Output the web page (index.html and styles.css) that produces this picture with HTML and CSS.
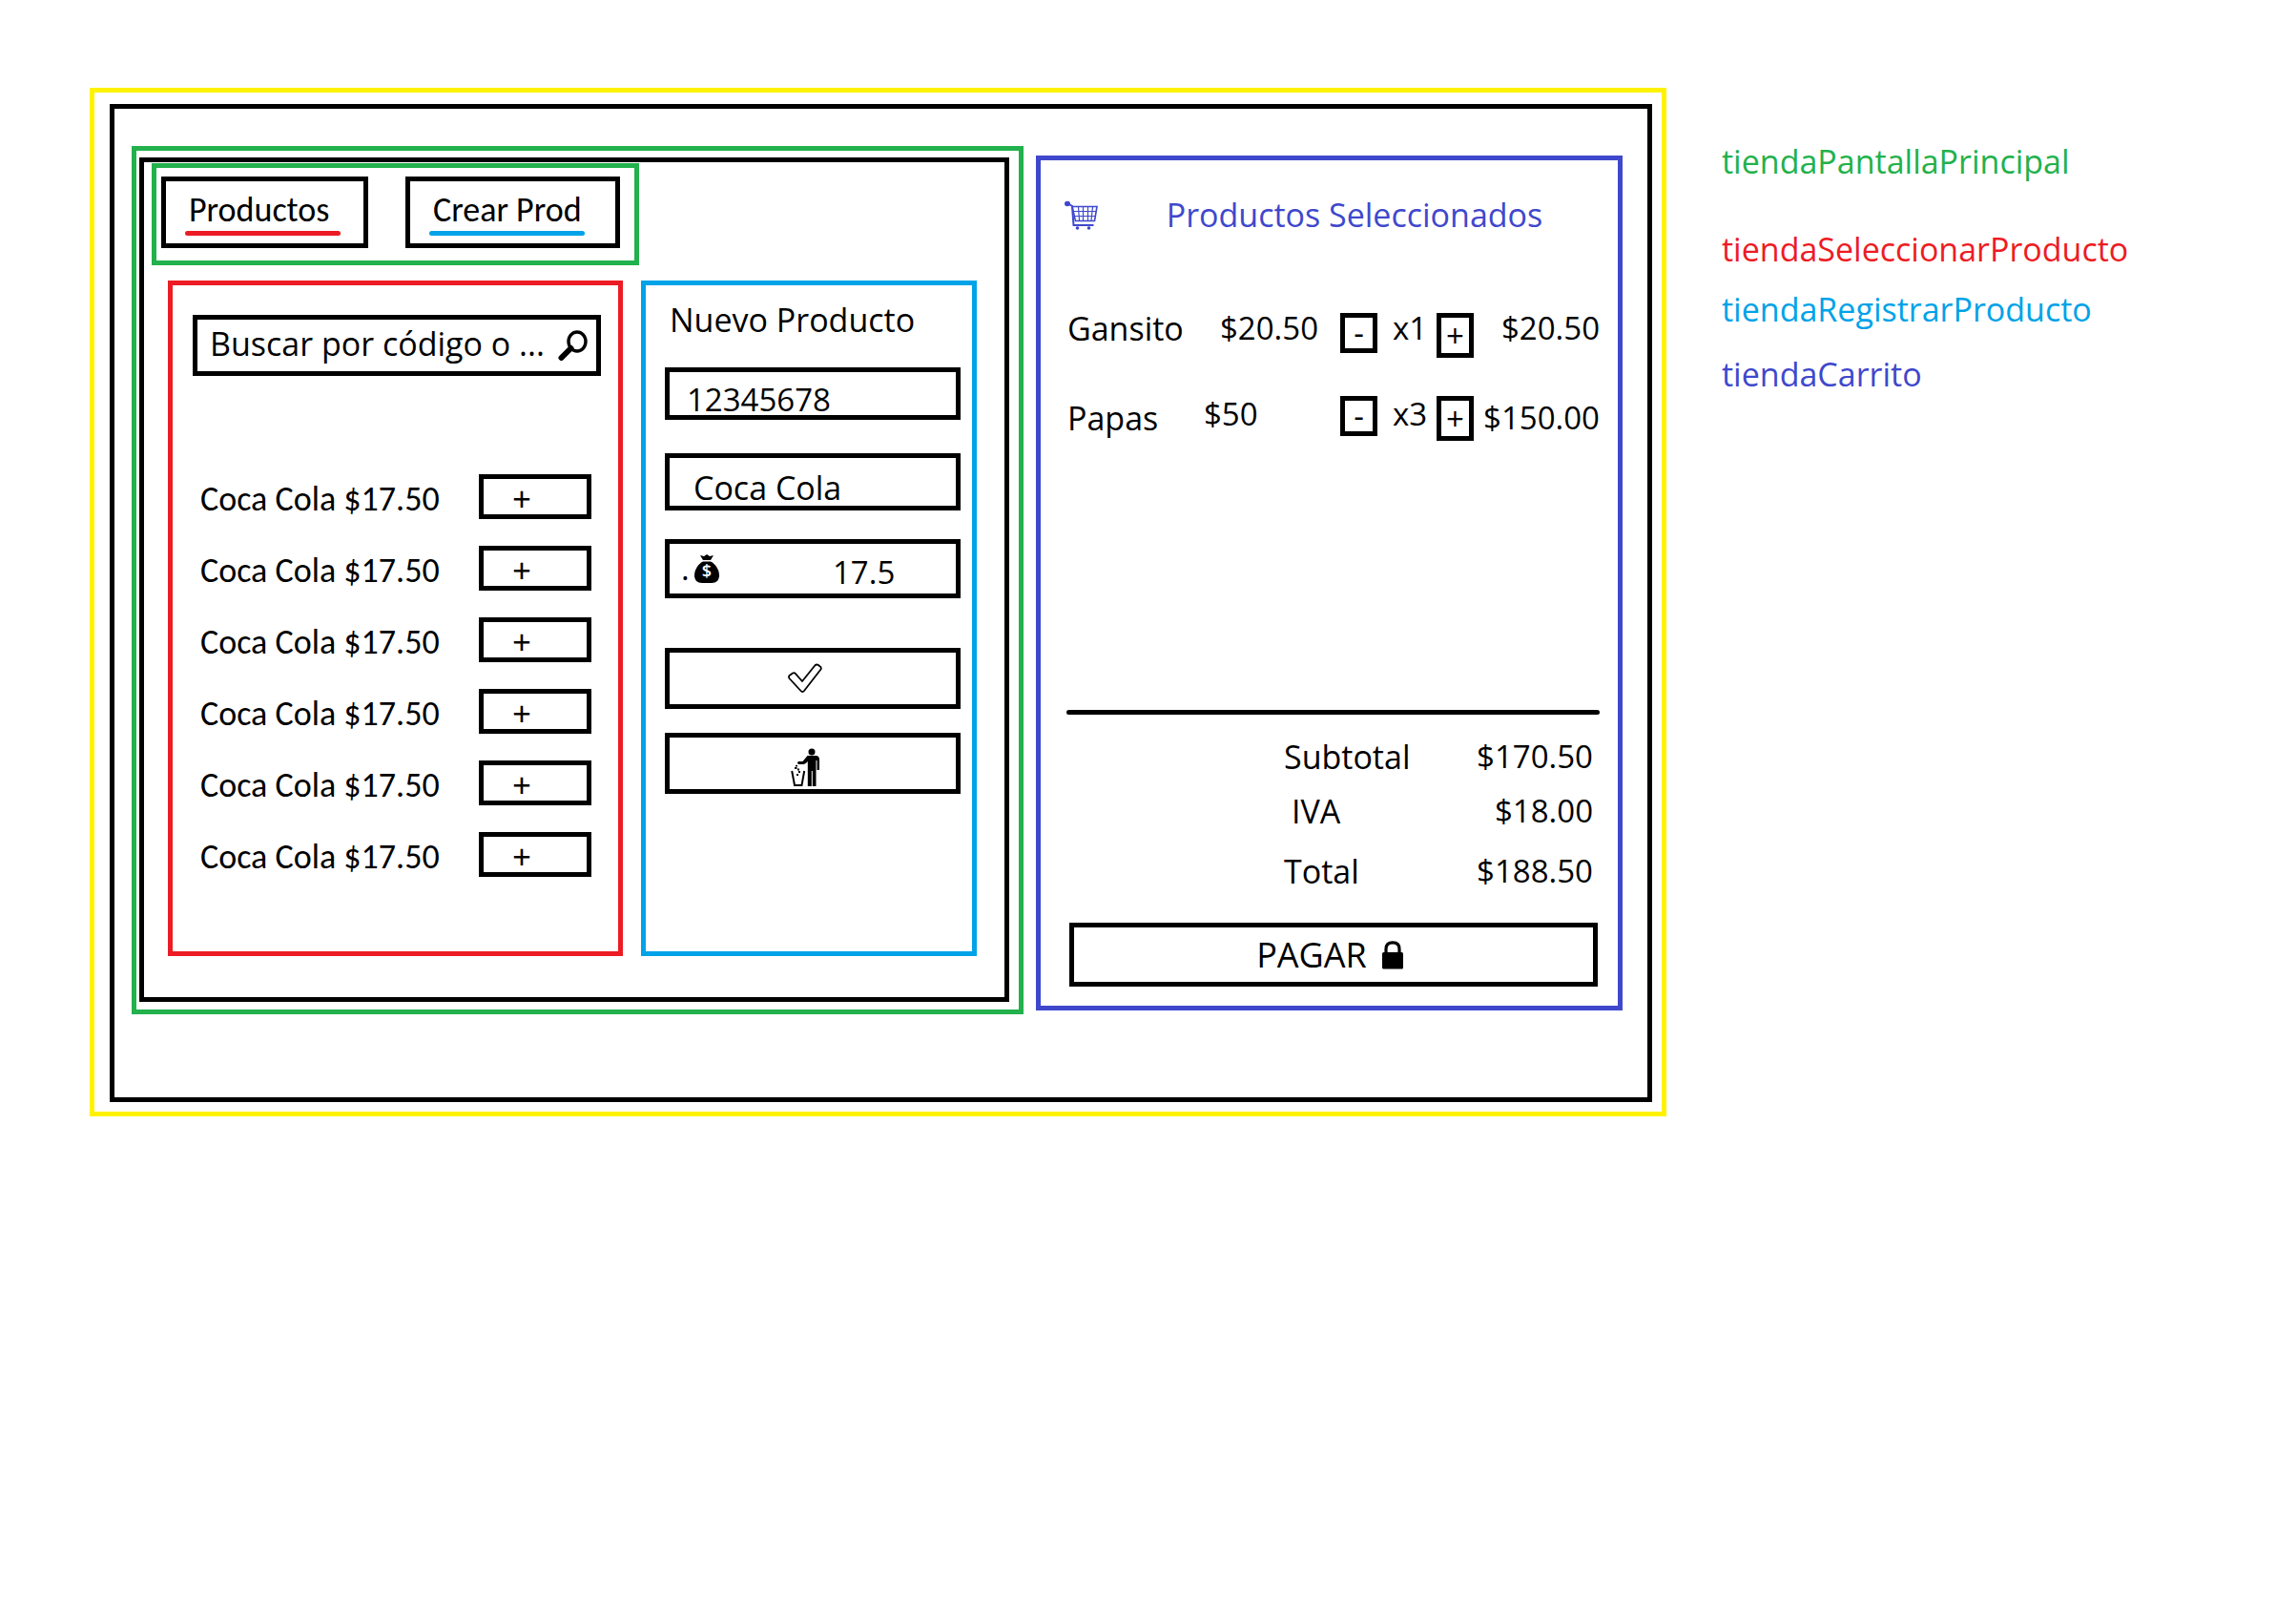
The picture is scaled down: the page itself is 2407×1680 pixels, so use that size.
FILE: index.html
```html
<!DOCTYPE html>
<html lang="es">
<head>
<meta charset="utf-8">
<meta name="viewport" content="width=device-width, initial-scale=1">
<title>Tienda</title>
<link rel="stylesheet" href="styles.css">
</head>
<body>
<div class="page">
  <main class="store">
    <div class="store__screen">
      <section class="workspace">
        <div class="workspace__inner">
          <nav class="tabs">
            <button class="tab tab--products" type="button"><span class="tab__label">Productos</span></button>
            <button class="tab tab--create" type="button"><span class="tab__label">Crear Prod</span></button>
          </nav>
          <div class="panels">
            <section class="picker">
              <div class="search">
                <input class="search__input" type="text" aria-label="Buscar por código o nombre" placeholder="Buscar por código o ...">
                <svg class="search__icon" viewBox="0 0 32 32" width="32" height="32" aria-hidden="true">
                  <ellipse cx="20" cy="12" rx="9" ry="10" fill="none" stroke="#000" stroke-width="3.400"/>
                  <path d="M13.500 19 L3.500 29" stroke="#000" stroke-width="6" stroke-linecap="round"/>
                </svg>
              </div>
              <ul class="products">
                <li class="product"><span>Coca Cola $17.50</span><button class="product__add" type="button">+</button></li>
                <li class="product"><span>Coca Cola $17.50</span><button class="product__add" type="button">+</button></li>
                <li class="product"><span>Coca Cola $17.50</span><button class="product__add" type="button">+</button></li>
                <li class="product"><span>Coca Cola $17.50</span><button class="product__add" type="button">+</button></li>
                <li class="product"><span>Coca Cola $17.50</span><button class="product__add" type="button">+</button></li>
                <li class="product"><span>Coca Cola $17.50</span><button class="product__add" type="button">+</button></li>
              </ul>
            </section>
            <form class="creator">
              <h2 class="creator__title">Nuevo Producto</h2>
              <div class="creator__fields">
                <input class="field field--code" type="text" aria-label="Código" value="12345678">
                <input class="field field--name" type="text" aria-label="Nombre" value="Coca Cola">
                <div class="price-field">
                  <label class="price-field__label" for="price">.
                    <svg viewBox="0 0 26 30" width="26" height="30" role="img" aria-label="Precio">
                      <path d="M6 1 L10 2 L13 0 L16 2 L20 1 L17 6 H9 Z"/>
                      <path d="M9 7.500 H17 C22 10 26 16 26 22 C26 27 23 30 18 30 H8 C3 30 0 27 0 22 C0 16 4 10 9 7.500 Z"/>
                      <text class="price-field__sign" x="13" y="24" text-anchor="middle">$</text>
                    </svg>
                  </label>
                  <input class="price-field__input" id="price" type="text" value="17.5">
                </div>
              </div>
              <div class="creator__actions">
                <button class="action" type="submit" aria-label="Guardar">
                  <svg viewBox="0 0 36 32" width="36" height="32" fill="none" stroke="#000" stroke-width="1.800" stroke-linejoin="round" aria-hidden="true">
                    <path d="M1.500 13 Q0.500 14.500 1.500 16 L13.500 29 Q15.300 31 17 29 L34.500 6.500 Q35.500 4.500 33.500 3.300 L31.500 1.800 Q30 1 28.500 2.300 L15 19 L7.800 10.800 Q6.500 9.500 5 10.500 Z"/>
                  </svg>
                </button>
                <button class="action" type="reset" aria-label="Descartar">
                  <svg class="action__litter" viewBox="0 0 30 40" width="30" height="40" aria-hidden="true">
                    <circle cx="22" cy="4" r="3.500"/>
                    <path d="M17.500 8 H27 Q30 8.500 30 12 V23 H27.500 V13 H26.500 V40 H22.800 V24 H21.800 V40 H17.800 V14 Q15.500 17 13.500 17 H8.500 Q7 16.800 7 15.500 Q7 14.200 8.500 14 H12.500 Z"/>
                    <path d="M1.200 24 L4 39 H11.500 L14.200 24" fill="none" stroke="#000" stroke-width="2"/>
                    <path d="M4 20 h2.500 v2 h-2.500 z M7 21.500 h2 v2 h-2 z M5 18 h2 v1.500 h-2 z M8 24 h2 v2 h-2 z M6 27 h2 v2 h-2 z"/>
                  </svg>
                </button>
              </div>
            </form>
          </div>
        </div>
      </section>

      <section class="cart">
        <header class="cart__header">
          <svg viewBox="0 0 35 31" width="35" height="31" fill="none" stroke="#3f48cc" aria-hidden="true">
            <ellipse cx="3" cy="3.500" rx="3" ry="2.800" fill="#3f48cc" stroke="none"/>
            <path d="M4 3.500 L8 6 L9.500 26 H30.500" stroke-width="2"/>
            <path d="M7.500 6.500 H34 L31.500 21.500 H11.500 L8 6.500" stroke-width="1.600"/>
            <path d="M9 11.500 H33 M10 16.500 H32 M14.500 7 L15.500 21 M19.500 7 V21 M24.500 7 V21 M29.500 7 L28 21" stroke-width="1.200"/>
            <circle cx="13.500" cy="29" r="1.800" fill="#3f48cc" stroke="none"/>
            <circle cx="25.500" cy="29" r="1.800" fill="#3f48cc" stroke="none"/>
          </svg>
          <h2 class="cart__title">Productos Seleccionados</h2>
        </header>
        <table class="items">
          <colgroup>
            <col class="items__col-name"><col class="items__col-price"><col class="items__col-less">
            <col class="items__col-count"><col class="items__col-more"><col class="items__col-total">
          </colgroup>
          <tbody>
            <tr>
              <td class="items__name">Gansito</td>
              <td class="items__price">$20.50</td>
              <td class="items__step"><button class="step step--less" type="button">-</button></td>
              <td class="items__count">x1</td>
              <td class="items__step items__step--more"><button class="step step--more" type="button">+</button></td>
              <td class="items__total">$20.50</td>
            </tr>
            <tr>
              <td class="items__name">Papas</td>
              <td class="items__price items__price--whole">$50</td>
              <td class="items__step"><button class="step step--less" type="button">-</button></td>
              <td class="items__count">x3</td>
              <td class="items__step items__step--more"><button class="step step--more" type="button">+</button></td>
              <td class="items__total">$150.00</td>
            </tr>
          </tbody>
        </table>
        <hr class="cart__rule">
        <dl class="totals">
          <div class="totals__row"><dt>Subtotal</dt><dd>$170.50</dd></div>
          <div class="totals__row totals__row--tax"><dt>IVA</dt><dd>$18.00</dd></div>
          <div class="totals__row totals__row--final"><dt>Total</dt><dd>$188.50</dd></div>
        </dl>
        <button class="pay" type="button">PAGAR
          <svg viewBox="0 0 22 30" width="22" height="30" aria-hidden="true">
            <path d="M4 13 V8.500 Q4 1.800 11 1.800 Q18 1.800 18 8.500 V13" fill="none" stroke="#000" stroke-width="3.200"/>
            <rect x="0" y="12" width="22" height="17.500" rx="1.500"/>
          </svg>
        </button>
      </section>
    </div>
  </main>

  <aside>
    <ul class="legend">
      <li class="legend__main">tiendaPantallaPrincipal</li>
      <li class="legend__picker">tiendaSeleccionarProducto</li>
      <li class="legend__creator">tiendaRegistrarProducto</li>
      <li class="legend__cart">tiendaCarrito</li>
    </ul>
  </aside>
</div>
</body>
</html>
```
FILE: styles.css
```css
:root {
  --green: #22b14c;
  --red: #ed1c24;
  --blue: #00a2e8;
  --indigo: #3f48cc;
  --yellow: #fff200;
  --line: 5px;
}

* { box-sizing: border-box; }

body {
  margin: 0;
  background: #fff;
  color: #000;
  font: 34px/48px "Open Sans", "Noto Sans", sans-serif;
}

h2, ul, dl, dd { margin: 0; padding: 0; font: inherit; }
ul { list-style: none; }
svg { display: block; flex: none; }

button, input {
  margin: 0;
  padding: 0;
  border: var(--line) solid #000;
  border-radius: 0;
  background: #fff;
  color: #000;
  font: inherit;
}

.page {
  display: grid;
  grid-template-columns: 1653fr 660fr;
  align-items: start;
  padding: 92px 0 92px 94px;
}

/* Store frame */
.store {
  border: var(--line) solid var(--yellow);
  padding: 12px 10px 10px 16px;
}

.store__screen {
  display: grid;
  grid-template-columns: 935fr 615fr;
  gap: 13px;
  align-items: start;
  border: var(--line) solid #000;
  padding: 39px 26px 87px 18px;
}

.workspace {
  border: var(--line) solid var(--green);
  padding: 7px 10px 8px 3px;
}

.workspace__inner {
  border: var(--line) solid #000;
  padding: 1px 0 43px;
}

/* Tabs */
.tabs {
  display: grid;
  grid-template-columns: 217px 225px;
  gap: 39px;
  width: fit-content;
  margin-left: 8px;
  border: var(--line) solid var(--green);
  padding: 9px 15px 13px 5px;
}

.tab {
  display: flex;
  align-items: flex-start;
  height: 75px;
  padding: 8px 20px;
  font: 36px/44px "Carlito", "Lato", sans-serif;
}

.tab__label {
  flex: none;
  width: 163px;
  padding-left: 4px;
  text-align: left;
}

.tab__label::after {
  content: "";
  display: block;
  height: 5px;
  margin-left: -4px;
  border-radius: 3px;
}

.tab--products .tab__label::after { background: var(--red); }
.tab--create .tab__label::after { background: var(--blue); }

/* Panels */
.panels {
  display: grid;
  grid-template-columns: minmax(0, 477fr) minmax(0, 352fr);
  gap: 19px;
  margin-top: 16px;
  padding: 0 29px 0 25px;
}

.picker {
  border: var(--line) solid var(--red);
  padding: 31px 18px 73px 21px;
}

.search {
  display: flex;
  align-items: center;
  height: 64px;
  border: var(--line) solid #000;
  padding: 0 8px 0 13px;
}

.search__input {
  flex: 1;
  min-width: 0;
  border: 0;
  padding-bottom: 4px;
}

.search__input::placeholder { color: #000; opacity: 1; }

.products {
  display: grid;
  gap: 23px;
  margin-top: 103px;
  padding: 0 10px 0 8px;
}

.product {
  display: flex;
  justify-content: space-between;
  align-items: flex-start;
  font: 36px/52px "Carlito", "Lato", sans-serif;
}

.product__add {
  width: 118px;
  height: 47px;
  padding: 4px 28px 0 0;
  line-height: 32px;
}

/* New product form */
.creator {
  border: var(--line) solid var(--blue);
  padding: 12px 12px 24px 20px;
}

.creator__title { padding-left: 5px; }

.creator__fields {
  display: grid;
  grid-auto-rows: 90px;
  align-items: start;
  margin-top: 26px;
}

.field {
  width: 100%;
  height: 60px;
  padding: 12px 8px 0 18px;
  line-height: 36px;
}

.field--code { height: 55px; font-size: 33px; }
.field--name { padding-left: 25px; }

.price-field {
  display: grid;
  grid-template-columns: 159px minmax(0, 1fr);
  height: 62px;
  border: var(--line) solid #000;
  padding-left: 12px;
  font-size: 33px;
}

.price-field__label {
  display: flex;
  align-items: center;
  gap: 5px;
}

.price-field__sign {
  fill: #fff;
  font-size: 18px;
  font-weight: 600;
}

.price-field__input {
  width: 100%;
  border: 0;
  padding-top: 8px;
  line-height: 36px;
}

.creator__actions {
  display: grid;
  gap: 25px;
  margin-top: 24px;
}

.action {
  display: flex;
  align-items: center;
  justify-content: center;
  height: 64px;
  padding-right: 16px;
}

.action__litter { margin-top: 8px; }

/* Cart */
.cart {
  margin-top: 10px;
  border: var(--line) solid var(--indigo);
  padding: 33px 19px 20px 25px;
}

.cart__header {
  display: grid;
  grid-template-columns: 35px 1fr;
  gap: 12px;
  align-items: center;
}

.cart__title {
  color: var(--indigo);
  text-align: center;
}

.items {
  width: 100%;
  margin-top: 71px;
  border-collapse: collapse;
  table-layout: fixed;
  font-size: 33px;
}

.items__col-name { width: 146px; }
.items__col-price { width: 143px; }
.items__col-less { width: 48px; }
.items__col-count { width: 48px; }
.items__col-more { width: 50px; }
.items__col-total { width: 126px; }

.items tr { height: 90px; }
.items td { padding: 0; vertical-align: top; }
.items .items__name { padding-left: 3px; font-size: 34px; }
.items .items__price { padding-left: 17px; }
.items .items__price--whole { padding-left: 0; }
.items .items__step { padding-top: 8px; }
.items .items__step--more { padding-left: 5px; }
.items .items__count { padding-left: 2px; text-align: center; }
.items .items__total { text-align: right; }
.items tr + tr .items__step { padding-top: 5px; }
.items tr + tr .items__name,
.items tr + tr .items__total { padding-top: 4px; }

.step {
  display: block;
  width: 39px;
  line-height: 32px;
}

.step--less { height: 42px; }
.step--more { height: 47px; }

.cart__rule {
  height: 5px;
  margin: 244px 0 0 2px;
  border: 0;
  border-radius: 3px;
  background: #000;
}

.totals {
  margin-top: 20px;
  padding: 0 7px 0 230px;
}

.totals__row {
  display: flex;
  justify-content: space-between;
}

.totals__row dd { font-size: 33px; }
.totals__row--tax { margin: 9px 0 15px; padding-left: 8px; }

.pay {
  display: flex;
  align-items: center;
  justify-content: center;
  gap: 16px;
  width: calc(100% - 7px);
  height: 67px;
  margin: 30px 2px 0 5px;
  padding-right: 8px;
  font-size: 36px;
}

/* Component names */
.legend { padding: 53px 0 0 58px; }
.legend li { margin-bottom: 20px; }
.legend .legend__main { margin-bottom: 44px; color: var(--green); }
.legend .legend__picker { margin-bottom: 15px; color: var(--red); }
.legend__creator { color: var(--blue); }
.legend__cart { color: var(--indigo); }
```
